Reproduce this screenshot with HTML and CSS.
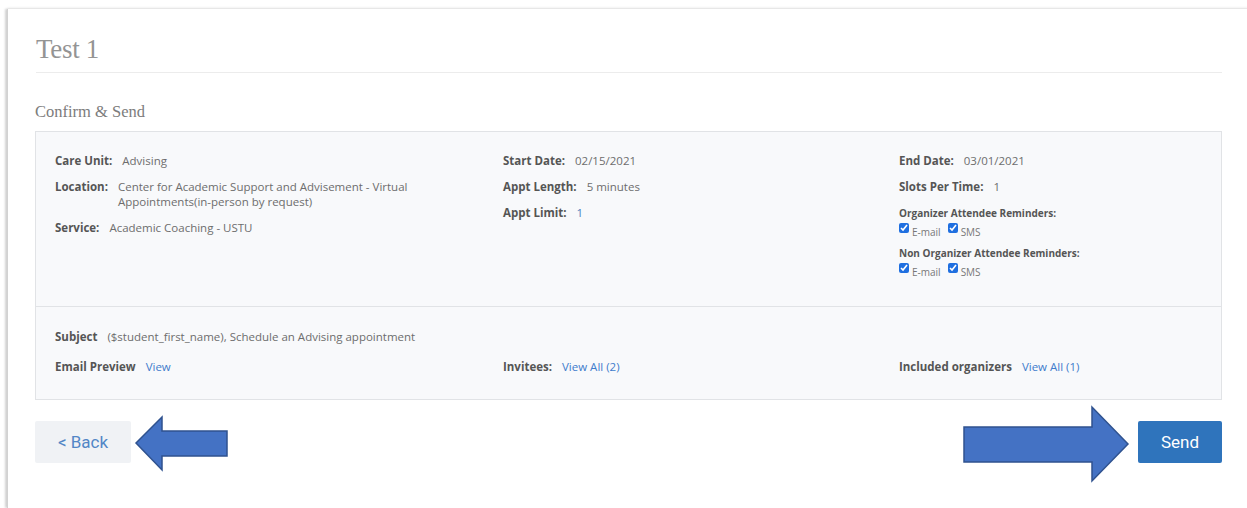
FILE: index.html
```html
<!DOCTYPE html>
<html lang="en">
<head>
<meta charset="utf-8">
<title>Test 1 - Confirm &amp; Send</title>
<link rel="stylesheet" href="styles.css">
</head>
<body>
<div class="card">
  <header class="card-head">
    <h1 class="title">Test 1</h1>
  </header>

  <h2 class="step-title">Confirm &amp; Send</h2>

  <section class="summary">
    <div class="summary-top grid3">
      <div class="col col-first">
        <div class="field"><span class="label">Care Unit:</span><span class="value">Advising</span></div>
        <div class="field"><span class="label">Location:</span><span class="value">Center for Academic Support and Advisement - Virtual Appointments(in-person by request)</span></div>
        <div class="field"><span class="label">Service:</span><span class="value">Academic Coaching - USTU</span></div>
      </div>
      <div class="col">
        <div class="field"><span class="label">Start Date:</span><span class="value">02/15/2021</span></div>
        <div class="field"><span class="label">Appt Length:</span><span class="value">5 minutes</span></div>
        <div class="field"><span class="label">Appt Limit:</span><span class="value value-blue">1</span></div>
      </div>
      <div class="col">
        <div class="field"><span class="label">End Date:</span><span class="value">03/01/2021</span></div>
        <div class="field"><span class="label">Slots Per Time:</span><span class="value">1</span></div>
        <div class="reminders">
          <div class="reminder-title">Organizer Attendee Reminders:</div>
          <div class="checks">
            <label class="check"><input type="checkbox" checked><span>E-mail</span></label>
            <label class="check"><input type="checkbox" checked><span>SMS</span></label>
          </div>
          <div class="reminder-title">Non Organizer Attendee Reminders:</div>
          <div class="checks">
            <label class="check"><input type="checkbox" checked><span>E-mail</span></label>
            <label class="check"><input type="checkbox" checked><span>SMS</span></label>
          </div>
        </div>
      </div>
    </div>

    <div class="summary-bottom">
      <div class="field field-subject"><span class="label">Subject</span><span class="value">($student_first_name), Schedule an Advising appointment</span></div>
      <div class="grid3">
        <div class="field"><span class="label">Email Preview</span><a class="link" href="#">View</a></div>
        <div class="field"><span class="label">Invitees:</span><a class="link" href="#">View All (2)</a></div>
        <div class="field"><span class="label">Included organizers</span><a class="link" href="#">View All (1)</a></div>
      </div>
    </div>
  </section>

  <div class="actions">
    <button class="btn btn-back" type="button">&lt; Back</button>
    <button class="btn btn-send" type="button">Send</button>
  </div>
</div>

<!-- callout arrows pointing at the two buttons -->
<svg class="callouts" viewBox="0 0 1247 508" width="1247" height="508" aria-hidden="true">
  <polygon class="callout" points="136,443 162,417 162,431 227,431 227,456 162,456 162,470"/>
  <polygon class="callout" points="964,427 1092,427 1092,407 1128,444 1092,481 1092,462 964,462"/>
</svg>
</body>
</html>
```

FILE: styles.css
```css
html, body {
  margin: 0;
  padding: 0;
}

body {
  position: relative;
  height: 508px;
  overflow: hidden;
  background: #ffffff;
  font-family: "Open Sans", "Liberation Sans", sans-serif;
  font-size: 11.5px;
  color: #6d6d6d;
}

/* page card */
.card {
  box-sizing: border-box;
  width: 1243px;
  height: 499px;
  margin: 9px 0 0 7px;
  padding: 23px 28px 0 27px;
  background: #ffffff;
  border-left: 1px solid #d2d2d2;
  box-shadow: -2px 0 2px rgba(0, 0, 0, 0.16), 0 -1px 3px rgba(0, 0, 0, 0.07);
}

.card-head {
  border-bottom: 1px solid #ececec;
  margin-left: 1px;
}

.title {
  margin: 0;
  padding: 0 0 6px 0;
  font-family: "Liberation Serif", serif;
  font-weight: normal;
  font-size: 27px;
  line-height: 34px;
  letter-spacing: -0.3px;
  color: #949494;
}

.step-title {
  margin: 29px 0 9px;
  font-family: "Liberation Serif", serif;
  font-weight: normal;
  font-size: 16.5px;
  line-height: 20px;
  color: #7c7c7c;
}

/* summary box */
.summary {
  background: #f8f9fb;
  border: 1px solid #e1e3e6;
}

.grid3 {
  display: grid;
  grid-template-columns: 448px 396px 1fr;
}

.summary-top {
  padding: 21px 19px 28px;
  border-bottom: 1px solid #e1e3e6;
}

.col-first {
  padding-right: 80px;
}

.field {
  display: flex;
  align-items: flex-start;
  line-height: 15px;
  margin-bottom: 11px;
}

.col .field:last-child {
  margin-bottom: 0;
}

.label {
  flex: none;
  font-weight: 700;
  color: #555555;
  margin-right: 10px;
}

.value {
  color: #6d6d6d;
}

.value-blue {
  color: #4d7fc0;
}

.link {
  color: #3f7ccc;
  text-decoration: none;
}

/* reminder checkboxes */
.reminders {
  margin-top: 12px;
}

.reminder-title {
  font-size: 10px;
  font-weight: 700;
  line-height: 14px;
  color: #555555;
}

.checks {
  display: flex;
  gap: 7px;
  height: 16px;
  margin: 2px 0 8px;
}

.checks:last-child {
  margin-bottom: 0;
}

.check {
  display: flex;
  align-items: flex-start;
  font-size: 10px;
  color: #777777;
}

.check input {
  width: 10px;
  height: 10px;
  margin: 1px 3px 0 0;
  accent-color: #1f6fe0;
}

.check span {
  line-height: 13px;
  padding-top: 4px;
}

.summary-bottom {
  padding: 22px 19px 25px;
}

.field-subject {
  margin-bottom: 15px;
}

.summary-bottom .grid3 .field {
  margin-bottom: 0;
}

/* footer buttons */
.actions {
  display: flex;
  justify-content: space-between;
  margin-top: 21px;
}

.btn {
  height: 42px;
  border: 0;
  border-radius: 2px;
  font-family: Roboto, "Liberation Sans", sans-serif;
  font-size: 17px;
  cursor: pointer;
}

.btn-back {
  width: 96px;
  background: #f0f2f5;
  color: #5286c6;
}

.btn-send {
  width: 84px;
  background: #2f74bc;
  color: #ffffff;
}

/* callout arrows drawn over the page */
.callouts {
  position: absolute;
  left: 0;
  top: 0;
  pointer-events: none;
}

.callout {
  fill: #4472c4;
  stroke: #2f528f;
  stroke-width: 1.5;
  stroke-linejoin: miter;
}
```
